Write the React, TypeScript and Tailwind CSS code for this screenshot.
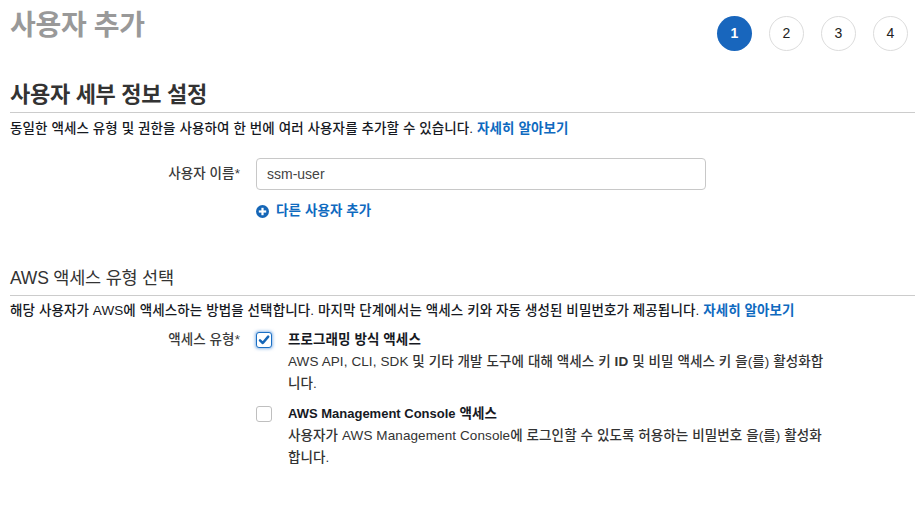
import React from "react";

function Step({ n, active }: { n: number; active?: boolean }) {
  return active ? (
    <div className="w-[35px] h-[35px] rounded-full bg-[#1866bd] text-white flex items-center justify-center text-[14px] font-bold">
      {n}
    </div>
  ) : (
    <div className="w-[35px] h-[35px] rounded-full border border-[#dcdcdc] bg-white text-[#222] flex items-center justify-center text-[14px]">
      {n}
    </div>
  );
}

export default function App() {
  return (
    <div className="w-[915px] h-[529px] bg-white overflow-hidden pl-[10px] font-['Liberation_Sans','Noto_Sans_CJK_KR',sans-serif] text-[#16191f]">
      {/* Header */}
      <div className="flex justify-between items-start pr-[7px] h-[51px]">
        <h1 className="pt-[7px] text-[28px] leading-[38px] font-bold text-[#999999] tracking-[-0.3px]">
          사용자 추가
        </h1>
        <div className="flex gap-[17px] pt-[16px]">
          <Step n={1} active />
          <Step n={2} />
          <Step n={3} />
          <Step n={4} />
        </div>
      </div>

      {/* Section 1 */}
      <div className="mt-[29px] border-b border-[#cccccc] pb-[2px]">
        <h2 className="text-[22px] leading-[30px] font-bold text-[#333333] tracking-[-0.3px]">
          사용자 세부 정보 설정
        </h2>
      </div>
      <p className="mt-[6px] text-[13.5px] leading-[20px] font-medium text-[#16191f] tracking-[0.1px]">
        동일한 액세스 유형 및 권한을 사용하여 한 번에 여러 사용자를 추가할 수 있습니다.{" "}
        <span className="text-[#0f6abf] font-bold">자세히 알아보기</span>
      </p>

      <div className="mt-[19px] flex items-center">
        <label className="w-[230px] text-right text-[13.5px] font-medium text-[#3a3a3a] tracking-[0.1px]">
          사용자 이름*
        </label>
        <div className="ml-[16px] w-[450px] h-[32px] border border-[#c8c8c8] rounded-[4px] flex items-center px-[10px] text-[14px] text-[#444]">
          ssm-user
        </div>
      </div>

      <div className="mt-[11px] pl-[246px] flex items-center h-[20px]">
        <svg width="13" height="13" viewBox="0 0 13 13">
          <circle cx="6.5" cy="6.5" r="6.5" fill="#1566b7" />
          <rect x="5.4" y="2.8" width="2.2" height="7.4" fill="#fff" />
          <rect x="2.8" y="5.4" width="7.4" height="2.2" fill="#fff" />
        </svg>
        <span className="ml-[7px] text-[13.5px] font-bold text-[#0f6abf] tracking-[0.1px]">
          다른 사용자 추가
        </span>
      </div>

      {/* Section 2 */}
      <div className="mt-[44px] border-b border-[#cccccc] pb-[4px]">
        <h2 className="text-[17.5px] leading-[26px] font-normal text-[#333333] tracking-[-0.2px]">
          AWS 액세스 유형 선택
        </h2>
      </div>
      <p className="mt-[5px] text-[13.5px] leading-[20px] font-medium text-[#16191f] tracking-[0.1px] whitespace-nowrap">
        해당 사용자가 AWS에 액세스하는 방법을 선택합니다. 마지막 단계에서는 액세스 키와 자동 생성된 비밀번호가 제공됩니다.{" "}
        <span className="text-[#0f6abf] font-bold">자세히 알아보기</span>
      </p>

      <div className="mt-[8px] flex items-start">
        <label className="w-[230px] text-right text-[13.5px] leading-[22px] font-medium text-[#3a3a3a] tracking-[0.1px]">
          액세스 유형*
        </label>
        <div className="ml-[16px] flex flex-col gap-[8px]">
          <div className="flex items-start">
            <div className="mt-[3px] w-[16px] h-[16px] rounded-[3px] border border-[#1a6fc4] bg-white shadow-[0_0_3px_1px_rgba(40,120,210,0.5)] flex items-center justify-center">
              <svg width="12" height="12" viewBox="0 0 12 12">
                <path d="M2 6.3 L4.8 9 L10.2 2.6" fill="none" stroke="#1566b7" strokeWidth="2.5" strokeLinecap="round" strokeLinejoin="round" />
              </svg>
            </div>
            <div className="ml-[16px] text-[13.5px] leading-[22px] tracking-[0.1px]">
              <div className="font-bold text-[#16191f]">프로그래밍 방식 액세스</div>
              <div className="font-medium text-[#333] whitespace-nowrap">
                AWS API, CLI, SDK 및 기타 개발 도구에 대해 액세스 키 <span className="font-bold">ID</span> 및 비밀 액세스 키 을(를) 활성화합
                <br />
                니다.
              </div>
            </div>
          </div>
          <div className="flex items-start">
            <div className="mt-[3px] w-[16px] h-[16px] rounded-[3px] border border-[#bfbfbf] bg-white" />
            <div className="ml-[16px] text-[13.5px] leading-[22px] tracking-[0.1px]">
              <div className="font-bold text-[#16191f]">
                <span className="text-[13px] tracking-[0px]">AWS Management Console</span> 액세스
              </div>
              <div className="font-medium text-[#333] whitespace-nowrap">
                사용자가 AWS Management Console에 로그인할 수 있도록 허용하는 비밀번호 을(를) 활성화
                <br />
                합니다.
              </div>
            </div>
          </div>
        </div>
      </div>
    </div>
  );
}
